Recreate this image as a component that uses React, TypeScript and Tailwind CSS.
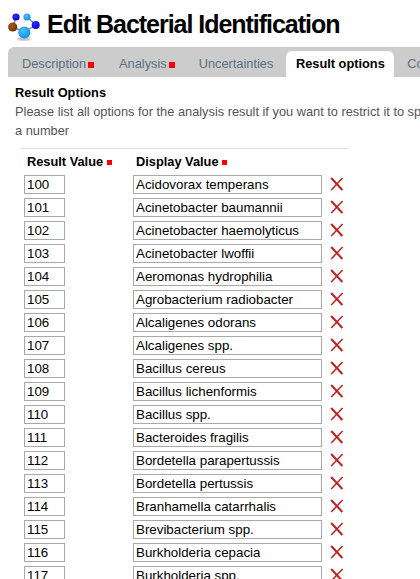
const rows = [
  ["100", "Acidovorax temperans"],
  ["101", "Acinetobacter baumannii"],
  ["102", "Acinetobacter haemolyticus"],
  ["103", "Acinetobacter lwoffii"],
  ["104", "Aeromonas hydrophilia"],
  ["105", "Agrobacterium radiobacter"],
  ["106", "Alcaligenes odorans"],
  ["107", "Alcaligenes spp."],
  ["108", "Bacillus cereus"],
  ["109", "Bacillus lichenformis"],
  ["110", "Bacillus spp."],
  ["111", "Bacteroides fragilis"],
  ["112", "Bordetella parapertussis"],
  ["113", "Bordetella pertussis"],
  ["114", "Branhamella catarrhalis"],
  ["115", "Brevibacterium spp."],
  ["116", "Burkholderia cepacia"],
  ["117", "Burkholderia spp."],
];

function Req({ className = "" }: { className?: string }) {
  return <span className={`inline-block bg-[#ff0000] ${className}`} />;
}

function Logo() {
  return (
    <svg width="34" height="34" viewBox="0 0 34 34" className="shrink-0">
      <defs>
        <radialGradient id="cy" cx="0.4" cy="0.35" r="0.7">
          <stop offset="0" stopColor="#4cc0ff" />
          <stop offset="1" stopColor="#0a8fe0" />
        </radialGradient>
        <radialGradient id="bl" cx="0.4" cy="0.35" r="0.7">
          <stop offset="0" stopColor="#3030ff" />
          <stop offset="1" stopColor="#0000d8" />
        </radialGradient>
        <radialGradient id="br" cx="0.4" cy="0.35" r="0.7">
          <stop offset="0" stopColor="#a85a20" />
          <stop offset="1" stopColor="#6e3000" />
        </radialGradient>
        <filter id="sh" x="-30%" y="-100%" width="160%" height="300%">
          <feGaussianBlur stdDeviation="1" />
        </filter>
      </defs>
      <ellipse cx="17" cy="32" rx="7" ry="1.6" fill="#b0b0b0" filter="url(#sh)" />
      <g stroke="#8a8a8a" strokeWidth="1.4">
        <line x1="6" y1="20" x2="9" y2="10" />
        <line x1="6" y1="20" x2="17" y2="25" />
        <line x1="20" y1="10" x2="29" y2="18" />
        <line x1="29" y1="18" x2="17" y2="25" />
      </g>
      <circle cx="5.7" cy="20" r="4.6" fill="url(#br)" />
      <circle cx="9" cy="10" r="3.6" fill="url(#bl)" />
      <circle cx="20" cy="10" r="3.6" fill="url(#cy)" />
      <circle cx="28.7" cy="18" r="4" fill="url(#bl)" />
      <circle cx="17.3" cy="25.5" r="6" fill="url(#cy)" />
    </svg>
  );
}

function Tab({ label, req, className = "pr-[12px]" }: { label: string; req?: boolean; className?: string }) {
  return (
    <div className={`flex items-center h-[26px] pl-[13px] text-[#5a7083] whitespace-nowrap shrink-0 ${className}`}>
      {label}
      {req && <Req className="ml-[2px] mt-[2px] w-[6px] h-[6px]" />}
    </div>
  );
}

export default function App() {
  return (
    <div className="w-[420px] h-[579px] overflow-hidden bg-white text-[12.8px] font-['Liberation_Sans',Arial,sans-serif] text-black">
      <div className="flex items-center h-[47px] pl-[7px]">
        <Logo />
        <h1 className="ml-[6px] text-[25px] leading-[32px] font-bold tracking-[-1.03px] whitespace-nowrap">
          Edit Bacterial Identification
        </h1>
      </div>
      <div className="ml-[8px] h-[30px] bg-[#cccccc] rounded-tl-[6px] flex items-end pl-px overflow-hidden">
        <Tab label="Description" req />
        <Tab label="Analysis" req className="pr-[11px]" />
        <Tab label="Uncertainties" className="pr-[13px]" />
        <div className="flex items-center justify-center shrink-0 w-[108px] h-[26px] bg-white rounded-t-[6px] font-bold">
          Result options
        </div>
        <Tab label="Comments" />
      </div>
      <div className="pl-[15px] pt-[8px] overflow-hidden">
        <div className="font-bold leading-[15px]">Result Options</div>
        <p className="mt-[2px] text-[#555555] leading-[19px] whitespace-nowrap">
          Please list all options for the analysis result if you want to restrict it to specific values
        </p>
        <p className="text-[#555555] leading-[19px]">a number</p>
      </div>
      <div className="ml-[21px] mt-[8px] w-[327px] border-t border-[#dddddd] pl-[3px]">
        <div className="flex items-center h-[26px] font-bold pb-[1px]">
          <div className="w-[109px] pl-[3px] flex items-center">
            Result Value
            <Req className="ml-[4px] mt-px w-[5px] h-[5px]" />
          </div>
          <div className="pl-[3px] flex items-center">
            Display Value
            <Req className="ml-[3px] mt-px w-[5px] h-[5px]" />
          </div>
        </div>
        <div className="flex flex-col gap-[4px] text-[13.333px]">
          {rows.map(([v, d]) => (
            <div key={v} className="flex items-center h-[19px] shrink-0">
              <div className="w-[41px] h-[19px] border border-[#a9a9a9] pl-[2px] leading-[17px] shrink-0">{v}</div>
              <div className="ml-[68px] w-[189px] h-[19px] border border-[#a9a9a9] pl-[2px] leading-[17px] shrink-0 whitespace-nowrap">
                {d}
              </div>
              <svg width="14" height="14" viewBox="0 0 14 14" className="ml-[8px] shrink-0 -mt-[1px]">
                <path d="M1.2 1 L12.4 13" stroke="#c02020" strokeWidth="2" fill="none" />
                <path d="M12.6 1 L1.2 13" stroke="#c02020" strokeWidth="1.5" fill="none" />
              </svg>
            </div>
          ))}
        </div>
      </div>
    </div>
  );
}
